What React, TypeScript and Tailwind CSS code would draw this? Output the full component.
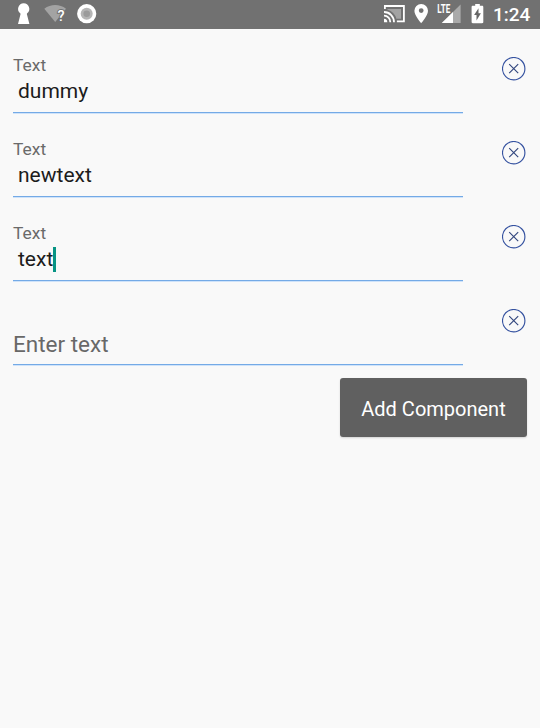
type Field = { id: number; value: string; focused?: boolean };

const fields: Field[] = [
  { id: 1, value: "dummy" },
  { id: 2, value: "newtext" },
  { id: 3, value: "text", focused: true },
  { id: 4, value: "" },
];

function RemoveIcon() {
  return (
    <svg viewBox="0 0 24 24" className="h-6 w-6" fill="none" stroke="#3552a0" strokeWidth="1.15">
      <circle cx="11.7" cy="11.7" r="11.2" />
      <path d="M7.2 7.2l9 9M16.2 7.2l-9 9" stroke="#34487f" />
    </svg>
  );
}

function StatusBar() {
  return (
    <header className="flex h-[29px] items-start bg-[#717171] text-white">
      <svg width="120" height="29" viewBox="0 0 120 29">
        <path
          d="M23.7 3.2a5.7 5.7 0 0 0-3.5 10.1c.3.3.4.6.3 1L18 23.9h11.4l-2.5-9.6c-.1-.4 0-.7.3-1a5.7 5.7 0 0 0-3.5-10.1z"
          fill="#fff"
        />
        <path d="M44.3 8.7C50.7 3.8 59.7 3.8 66 8.7L55.2 22z" fill="#a3a3a3" />
        <text
          x="57.6"
          y="21.3"
          fontSize="14.5"
          fontWeight="500"
          fontFamily="Roboto, sans-serif"
          fill="#fff"
          stroke="#717171"
          strokeWidth="2"
          paintOrder="stroke"
        >
          ?
        </text>
        <circle cx="86.7" cy="13.7" r="9.6" fill="#fff" />
        <circle cx="86.7" cy="13.7" r="6" fill="#b5b5b5" />
        <circle cx="86.7" cy="13.7" r="3.3" fill="#9b9b9b" />
      </svg>
      <svg className="ml-auto" width="115" height="29" viewBox="378 0 115 29">
        <g fill="none" stroke="#fff" strokeWidth="1.8">
          <path d="M384.9 9V6h19v15.4h-7" />
          <path d="M384 12a10 10 0 0 1 10 10.3M384 15.7a6.3 6.3 0 0 1 6.3 6.6" />
        </g>
        <path d="M384 18.8a3.4 3.4 0 0 1 3.3 3.5H384z" fill="#fff" />
        <path d="M387.5 9H401v9.7h-4.6a13 13 0 0 0-8.9-9z" fill="#a3a3a3" />
        <path
          d="M421.2 4a6.8 6.8 0 0 0-6.8 6.8c0 4.9 6.8 12.4 6.8 12.4s6.8-7.5 6.8-12.4A6.8 6.8 0 0 0 421.2 4zm0 4.2a2.4 2.4 0 1 1 0 4.8 2.4 2.4 0 0 1 0-4.8z"
          fill="#fff"
        />
        <path d="M460.6 4.4V23h-18.8z" fill="#aaa" />
        <path d="M453 12v11h-11.2z" fill="#fff" />
        <text
          x="437.3"
          y="13"
          fontSize="12"
          fontWeight="700"
          fontFamily="Roboto, sans-serif"
          textLength="13"
          lengthAdjust="spacingAndGlyphs"
          fill="#fff"
          stroke="#717171"
          strokeWidth="1.6"
          paintOrder="stroke"
        >
          LTE
        </text>
        <path
          d="M475.2 4h4.6v1.7h2.3c.8 0 1.2.5 1.2 1.2v15.2c0 .8-.5 1.2-1.2 1.2h-9.3c-.8 0-1.2-.5-1.2-1.2V6.9c0-.8.5-1.2 1.2-1.2h2.4z"
          fill="#fff"
        />
        <path d="M478.5 8.2v5h2.4l-4.4 7.3v-5.4h-2.4z" fill="#666" />
      </svg>
      <span className="w-[47px] pt-[5px] text-[19px] leading-5 font-medium">1:24</span>
    </header>
  );
}

function FieldRow({ field }: { field: Field }) {
  return (
    <div className="flex h-[84px] justify-between pr-3.5 pl-[13px]">
      <div className="flex w-[450px] flex-col border-b border-[#74aae6] shadow-[0_1px_0_#cfe3fa]">
        {field.value ? (
          <>
            <span className="mt-[26px] text-[17.4px] leading-5 text-[#6a6a6a]">Text</span>
            <div className="mt-[3px] flex h-[26px] items-center pl-[5px] text-[21px] leading-[26px] text-[#1c1c1c]">
              <span>{field.value}</span>
              {field.focused && <span className="h-[25px] w-[2.5px] bg-[#079484]" />}
            </div>
          </>
        ) : (
          <span className="mt-[49px] text-[22.5px] leading-7 text-[#686868]">Enter text</span>
        )}
      </div>
      <button type="button" aria-label="Remove" className="mt-7 h-6 w-6">
        <RemoveIcon />
      </button>
    </div>
  );
}

export default function App() {
  return (
    <div className="h-[728px] w-[540px] overflow-hidden bg-[#f9f9f9] font-[Roboto,sans-serif]">
      <StatusBar />
      <main>
        {fields.map((field) => (
          <FieldRow key={field.id} field={field} />
        ))}
        <div className="flex justify-end pt-[13px] pr-[13px]">
          <button
            type="button"
            className="h-[59px] w-[187px] rounded-[3px] bg-[#606060] pt-0.5 text-[20px] text-white shadow-[0_1px_2px_rgba(0,0,0,0.15)]"
          >
            Add Component
          </button>
        </div>
      </main>
    </div>
  );
}
